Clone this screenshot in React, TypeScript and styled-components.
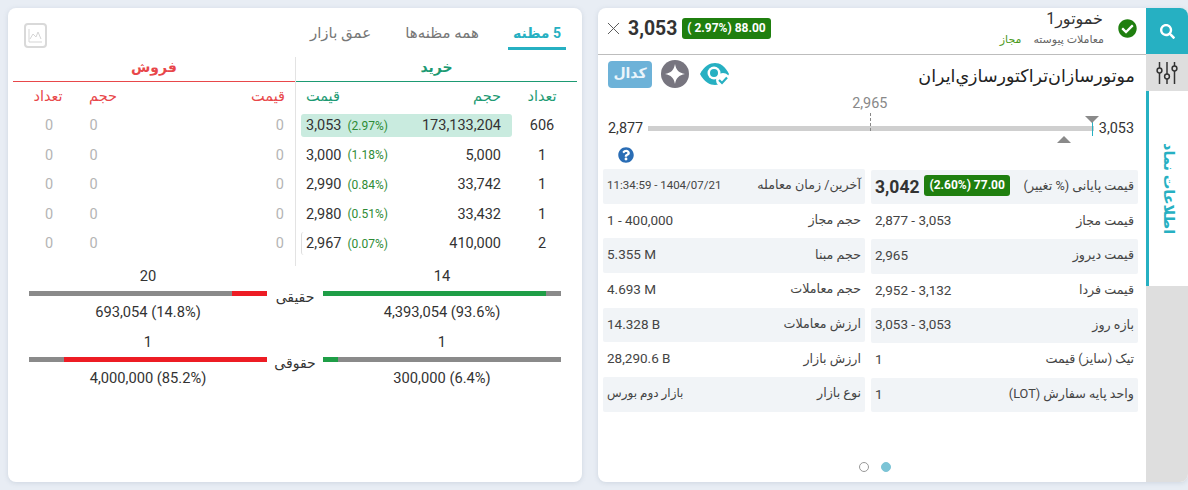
import React from "react";
import styled, { createGlobalStyle } from "styled-components";
import { FaCheckCircle, FaQuestionCircle, FaSearch } from "react-icons/fa";
import { X } from "lucide-react";

const FONT = `Roboto, "DejaVu Sans", sans-serif`;
const TEAL = "#26b0c2";
const BUY = "#1d9a73";
const SELL = "#e8474a";

const GlobalStyle = createGlobalStyle`
  html, body { margin: 0; padding: 0; background: #e8edf4; }
  body { font-family: ${FONT}; color: #333; width: 1188px; height: 490px; overflow: hidden; }
  * { box-sizing: border-box; }
`;

const Page = styled.div`
  display: flex;
  gap: 16px;
  padding: 8px 0 0 8px;
  height: 490px;
`;

const Card = styled.section`
  background: #fff;
  height: 474px;
  border-radius: 8px;
  box-shadow: 0 1px 5px rgba(90, 110, 140, 0.18);
`;

/* left card */
const BookCard = styled(Card)`
  width: 574px;
  padding: 0 5px;
  flex: none;
`;

const BookTop = styled.div`
  display: flex;
  align-items: flex-start;
  justify-content: space-between;
  height: 49px;
  padding: 15px 11px 0 11px;
`;

const ChartButton = styled.div`
  width: 23px;
  height: 25px;
  border: 2px solid #d9d9d9;
  border-radius: 4px;
  display: flex;
  align-items: center;
  justify-content: center;
`;

const Tabs = styled.div`
  display: flex;
  direction: rtl;
  margin-top: -6px;
`;

const Tab = styled.div<{ $active?: boolean }>`
  height: 33px;
  padding: 6px 5px 0;
  margin-left: 24px;
  font-size: ${(p) => (p.$active ? "14px" : "15px")};
  line-height: 20px;
  white-space: nowrap;
  font-weight: ${(p) => (p.$active ? 700 : 400)};
  color: ${(p) => (p.$active ? TEAL : "#777")};
  border-bottom: 3px solid ${(p) => (p.$active ? TEAL : "transparent")};
  &:last-child { margin-left: 0; }
`;

const Book = styled.div`
  display: flex;
  height: 209px;
`;

const Side = styled.div<{ $buy?: boolean }>`
  width: 282px;
  ${(p) => (p.$buy ? "border-left: 1px solid #e3e3e3;" : "")}
`;

const SideTitle = styled.div<{ $color: string }>`
  height: 25px;
  line-height: 21px;
  text-align: center;
  font-size: 14px;
  font-weight: 700;
  color: ${(p) => p.$color};
  border-bottom: 1px solid ${(p) => p.$color};
`;

const SideCols = styled.div`
  display: grid;
  align-items: center;
  height: 29px;
  font-size: 14.5px;
`;

const BuyHead = styled(SideCols)`
  grid-template-columns: 205px 1fr;
  padding-left: 10px;
  color: ${BUY};
`;

const SellHead = styled(SideCols)`
  grid-template-columns: 42px 68px 1fr;
  padding: 0 10px 0 14px;
  color: ${SELL};
`;

const HeadCell = styled.span`
  text-align: center;
  white-space: nowrap;
`;

const HeadCellEnd = styled.span`
  text-align: right;
`;

const BuyHeadVol = styled.div`
  display: flex;
  justify-content: space-between;
  padding-right: 10px;
`;

const CountHead = styled.div`
  text-align: center;
  padding-right: 4px;
  white-space: nowrap;
`;

const BuyRow = styled.div`
  display: flex;
  align-items: center;
  height: 29.5px;
  padding-left: 5px;
  font-size: 14.5px;
  color: #333;
`;

const BuyCell = styled.div<{ $hl?: boolean; $tick?: boolean }>`
  width: 211px;
  height: 23px;
  display: flex;
  align-items: center;
  padding: 0 11px 0 5px;
  border-radius: 3px;
  background: ${(p) => (p.$hl ? "#c9ebdf" : "transparent")};
  ${(p) => (p.$tick ? "border-left: 1px solid #ddd; padding-left: 4px;" : "")}
`;

const Pct = styled.span`
  font-size: 12px;
  color: #2e8b36;
  margin-left: 6px;
`;

const Vol = styled.span`
  margin-left: auto;
`;

const Count = styled.span`
  width: 60px;
  text-align: center;
`;

const SellRow = styled.div`
  display: grid;
  grid-template-columns: 44px 45px 1fr;
  align-items: center;
  height: 29.5px;
  padding: 0 11px 0 14px;
  font-size: 14.5px;
  color: #b5b5b5;
  & > span { text-align: center; }
  & > span:last-child { text-align: right; }
`;

const Split = styled.div`
  display: grid;
  grid-template-columns: 238px 56px 238px;
  padding-left: 16px;
  height: 66px;
`;

const SplitSide = styled.div`
  display: flex;
  flex-direction: column;
  align-items: center;
  font-size: 14.7px;
  color: #333;
  line-height: 20px;
`;

const SplitBar = styled.div`
  width: 100%;
  height: 5px;
  background: #8a8a8a;
  margin: 5px 0 6px;
  display: flex;
`;

const SplitFill = styled.div<{ $color: string; $end?: boolean }>`
  height: 100%;
  background: ${(p) => p.$color};
  margin-left: ${(p) => (p.$end ? "auto" : "0")};
`;

const SplitLabel = styled.div`
  text-align: center;
  font-size: 14px;
  line-height: 20px;
  padding-top: 21px;
  color: #333;
`;

/* right card */
const InfoCard = styled(Card)`
  width: 590px;
  display: flex;
  overflow: hidden;
  flex: none;
`;

const InfoBody = styled.div`
  width: 548px;
  flex: none;
  display: flex;
  flex-direction: column;
`;

const InfoHead = styled.header`
  height: 47px;
  border-bottom: 1px solid #bdbdbd;
  display: flex;
  align-items: center;
  padding: 0 9px 6px 5px;
`;

const PriceNow = styled.span`
  font-size: 19.4px;
  font-weight: 700;
  color: #333;
  margin-left: 4px;
`;

const Badge = styled.span`
  background: #1f7f0f;
  color: #fff;
  font-weight: 700;
  font-size: 12px;
  height: 21px;
  line-height: 21px;
  padding: 0 5px;
  border-radius: 3px;
  margin-left: 5px;
  direction: ltr;
  white-space: nowrap;
`;

const HeadName = styled.div`
  margin-left: auto;
  text-align: right;
  direction: rtl;
`;

const Ticker = styled.div`
  font-size: 16px;
  line-height: 22px;
  color: #333;
  margin-bottom: 2px;
  padding-right: 1px;
`;

const Status = styled.div`
  display: flex;
  gap: 12px;
  font-size: 11px;
  line-height: 16px;
  color: #666;
`;

const Allowed = styled.span`
  color: #4c9a1c;
  font-size: 11px;
`;

const CheckWrap = styled.span`
  display: flex;
  margin-left: 14px;
  color: #1f7f0f;
  font-size: 19px;
`;

const NameRow = styled.div`
  display: flex;
  align-items: center;
  height: 40px;
  padding: 0 11px 2px 10px;
`;

const Codal = styled.div`
  width: 44px;
  height: 27px;
  background: #6db2d8;
  border-radius: 4px;
  color: #eaf5fb;
  font-size: 14px;
  font-weight: 700;
  line-height: 25px;
  text-align: center;
  margin-right: 9px;
`;

const EyeWrap = styled.span`
  display: flex;
  margin-left: 11px;
`;

const CompanyName = styled.h1`
  margin: 4px 0 0 auto;
  font-size: 17.5px;
  font-weight: 400;
  color: #222;
  direction: rtl;
  white-space: nowrap;
`;

const RangeRow = styled.div`
  display: flex;
  align-items: center;
  height: 52px;
  padding: 15px 12px 0 10px;
  font-size: 14.4px;
  color: #333;
`;

const RangeTrack = styled.div`
  position: relative;
  flex: 1;
  height: 5px;
  background: #cfcfcf;
  margin: 0 5px;
`;

const YesterdayMark = styled.div`
  position: absolute;
  left: 222px;
  top: -13px;
  height: 18px;
  border-left: 1px dashed #888;
`;

const YesterdayLabel = styled.span`
  position: absolute;
  left: 204px;
  top: -31px;
  color: #888;
`;

const LastTick = styled.div`
  position: absolute;
  left: 444px;
  top: -4px;
  height: 14px;
  border-left: 1px solid ${TEAL};
`;

const Tri = styled.div<{ $down?: boolean; $left: number; $top: number }>`
  position: absolute;
  left: ${(p) => p.$left}px;
  top: ${(p) => p.$top}px;
  width: 0;
  height: 0;
  border-left: 7px solid transparent;
  border-right: 7px solid transparent;
  ${(p) => (p.$down ? "border-top: 7px solid #8a8a8a;" : "border-bottom: 7px solid #8a8a8a;")}
`;

const HelpRow = styled.div`
  height: 17px;
  padding-left: 20px;
  color: #2a6db5;
  font-size: 16px;
  line-height: 18px;
  margin-bottom: 5px;
`;

const Facts = styled.div`
  display: grid;
  grid-template-columns: 262px 267px;
  column-gap: 6px;
  padding-left: 5px;
`;

const FactCol = styled.div<{ $shift?: boolean }>`
  display: flex;
  flex-direction: column;
  margin-top: ${(p) => (p.$shift ? "0.6px" : "0")};
`;

const Fact = styled.div<{ $filled?: boolean }>`
  height: 34.7px;
  display: flex;
  align-items: center;
  justify-content: space-between;
  direction: rtl;
  padding: 0 4px 3px;
  border-radius: 2px;
  background: ${(p) => (p.$filled ? "#f1f4f7" : "transparent")};
  color: #444;
  white-space: nowrap;
`;

const FactLabel = styled.span`
  font-size: 12.7px;
`;

const FactValue = styled.span<{ $text?: boolean }>`
  direction: ltr;
  font-size: ${(p) => (p.$text ? "12px" : "13.5px")};
  color: #444;
`;

const TimeValue = styled(FactValue)`
  font-size: 11.5px;
`;

const ClosePrice = styled.span`
  display: flex;
  align-items: center;
  direction: ltr;
`;

const CloseNum = styled.span`
  font-size: 17.5px;
  font-weight: 700;
  color: #333;
  margin-top: 3px;
`;

const Dots = styled.div`
  display: flex;
  justify-content: center;
  gap: 12px;
  margin-top: auto;
  padding: 0 0 10px 6px;
`;

const Dot = styled.span<{ $on?: boolean }>`
  width: 10px;
  height: 10px;
  border-radius: 50%;
  border: 1px solid ${(p) => (p.$on ? "#7cc4d6" : "#999")};
  background: ${(p) => (p.$on ? "#7cc4d6" : "#fff")};
`;

const SideNav = styled.nav`
  width: 42px;
  flex: none;
  display: flex;
  flex-direction: column;
  background: #dedede;
`;

const SearchTab = styled.div`
  height: 46px;
  background: ${TEAL};
  color: #fff;
  display: flex;
  align-items: center;
  justify-content: center;
  font-size: 15px;
`;

const FilterTab = styled.div`
  height: 37px;
  display: flex;
  align-items: center;
  justify-content: center;
`;

const InfoTab = styled.div`
  height: 195px;
  background: #fff;
  border-left: 3px solid ${TEAL};
  display: flex;
  align-items: center;
  justify-content: center;
  writing-mode: vertical-rl;
  direction: rtl;
  color: ${TEAL};
  font-size: 14.5px;
  font-weight: 700;
  white-space: nowrap;
`;

const buyRows = [
  ["3,053", "(2.97%)", "173,133,204", "606"],
  ["3,000", "(1.18%)", "5,000", "1"],
  ["2,990", "(0.84%)", "33,742", "1"],
  ["2,980", "(0.51%)", "33,432", "1"],
  ["2,967", "(0.07%)", "410,000", "2"],
];

const priceFacts: [string, string][] = [
  ["قیمت مجاز", "2,877 - 3,053"],
  ["قیمت دیروز", "2,965"],
  ["قیمت فردا", "2,952 - 3,132"],
  ["بازه روز", "3,053 - 3,053"],
  ["تیک (سایز) قیمت", "1"],
  ["واحد پایه سفارش (LOT)", "1"],
];

const tradeFacts: [string, string][] = [
  ["حجم مجاز", "1 - 400,000"],
  ["حجم مبنا", "5.355 M"],
  ["حجم معاملات", "4.693 M"],
  ["ارزش معاملات", "14.328 B"],
  ["ارزش بازار", "28,290.6 B"],
  ["نوع بازار", "بازار دوم بورس"],
];

const ChartGlyph = () => (
  <svg width="15" height="15" viewBox="0 0 15 15" fill="none" stroke="#d5d5d5" strokeWidth="1">
    <path d="M1 1v13h13" />
    <path d="M2 11l3-5 3 3 2-5 3 7" />
  </svg>
);

const SlidersGlyph = () => (
  <svg width="22" height="24" viewBox="0 0 22 24" fill="none" stroke="#333" strokeWidth="1.5">
    <path d="M3.5 1v6M3.5 12v11M11 1v12M11 18v5M18.5 1v4M18.5 10v13" />
    <circle cx="3.5" cy="9.5" r="2.4" />
    <circle cx="11" cy="15.5" r="2.4" />
    <circle cx="18.5" cy="7.5" r="2.4" />
  </svg>
);

const StarBadge = () => (
  <svg width="28" height="28" viewBox="0 0 28 28">
    <circle cx="14" cy="14" r="14" fill="#77757f" />
    <path d="M14 4c1 6 4 9 10 10-6 1-9 4-10 10-1-6-4-9-10-10 6-1 9-4 10-10z" fill="#fff" />
  </svg>
);

const EyeBadge = () => (
  <svg width="30" height="26" viewBox="0 0 30 26">
    <path d="M0 13C4 5 10 2 15 2s10 3 14 11c-4 8-9 11-14 11S4 21 0 13z" fill={TEAL} />
    <circle cx="14" cy="12" r="6.5" fill="#fff" />
    <circle cx="14" cy="12" r="4" fill={TEAL} />
    <circle cx="23" cy="19" r="7" fill="#fff" />
    <path d="M19 19l3 3 5-5.5" fill="none" stroke={TEAL} strokeWidth="2.2" />
  </svg>
);

export default function App() {
  return (
    <>
      <GlobalStyle />
      <Page>
        <BookCard>
          <BookTop>
            <ChartButton>
              <ChartGlyph />
            </ChartButton>
            <Tabs>
              <Tab $active>5 مظنه</Tab>
              <Tab>همه مظنه‌ها</Tab>
              <Tab>عمق بازار</Tab>
            </Tabs>
          </BookTop>
          <Book>
            <Side>
              <SideTitle $color={SELL}>فروش</SideTitle>
              <SellHead>
                <HeadCell>تعداد</HeadCell>
                <HeadCell>حجم</HeadCell>
                <HeadCellEnd>قیمت</HeadCellEnd>
              </SellHead>
              {buyRows.map((r) => (
                <SellRow key={r[0]}>
                  <span>0</span>
                  <span>0</span>
                  <span>0</span>
                </SellRow>
              ))}
            </Side>
            <Side $buy>
              <SideTitle $color={BUY}>خرید</SideTitle>
              <BuyHead>
                <BuyHeadVol>
                  <span>قیمت</span>
                  <span>حجم</span>
                </BuyHeadVol>
                <CountHead>تعداد</CountHead>
              </BuyHead>
              {buyRows.map((r, i) => (
                <BuyRow key={r[0]}>
                  <BuyCell $hl={i === 0} $tick={i === 4}>
                    {r[0]}
                    <Pct>{r[1]}</Pct>
                    <Vol>{r[2]}</Vol>
                  </BuyCell>
                  <Count>{r[3]}</Count>
                </BuyRow>
              ))}
            </Side>
          </Book>
          <Split>
            <SplitSide>
              20
              <SplitBar>
                <SplitFill $color="#ed1c24" $end style={{ width: "14.8%" }} />
              </SplitBar>
              693,054 (14.8%)
            </SplitSide>
            <SplitLabel>حقیقی</SplitLabel>
            <SplitSide>
              14
              <SplitBar>
                <SplitFill $color="#1f9e47" style={{ width: "93.6%" }} />
              </SplitBar>
              4,393,054 (93.6%)
            </SplitSide>
          </Split>
          <Split>
            <SplitSide>
              1
              <SplitBar>
                <SplitFill $color="#ed1c24" $end style={{ width: "85.2%" }} />
              </SplitBar>
              4,000,000 (85.2%)
            </SplitSide>
            <SplitLabel>حقوقی</SplitLabel>
            <SplitSide>
              1
              <SplitBar>
                <SplitFill $color="#1f9e47" style={{ width: "6.4%" }} />
              </SplitBar>
              300,000 (6.4%)
            </SplitSide>
          </Split>
        </BookCard>

        <InfoCard>
          <InfoBody>
            <InfoHead>
              <X size={21} strokeWidth={1.1} color="#555" />
              <PriceNow>3,053</PriceNow>
              <Badge>( 2.97%) 88.00</Badge>
              <HeadName>
                <Ticker>خموتور1</Ticker>
                <Status>
                  معاملات پیوسته
                  <Allowed>مجاز</Allowed>
                </Status>
              </HeadName>
              <CheckWrap>
                <FaCheckCircle />
              </CheckWrap>
            </InfoHead>
            <NameRow>
              <Codal>کدال</Codal>
              <StarBadge />
              <EyeWrap>
                <EyeBadge />
              </EyeWrap>
              <CompanyName>موتورسازان‌تراکتورسازي‌ایران</CompanyName>
            </NameRow>
            <RangeRow>
              2,877
              <RangeTrack>
                <YesterdayLabel>2,965</YesterdayLabel>
                <YesterdayMark />
                <LastTick />
                <Tri $down $left={437} $top={-10} />
                <Tri $left={409} $top={10} />
              </RangeTrack>
              3,053
            </RangeRow>
            <HelpRow>
              <FaQuestionCircle />
            </HelpRow>
            <Facts>
              <FactCol>
                <Fact $filled>
                  <FactLabel>آخرین/ زمان معامله</FactLabel>
                  <TimeValue>11:34:59 - 1404/07/21</TimeValue>
                </Fact>
                {tradeFacts.map(([k, v], i) => (
                  <Fact key={k} $filled={i % 2 === 1}>
                    <FactLabel>{k}</FactLabel>
                    <FactValue $text={i === 5}>{v}</FactValue>
                  </Fact>
                ))}
              </FactCol>
              <FactCol $shift>
                <Fact $filled>
                  <FactLabel>قیمت پایانی (% تغییر)</FactLabel>
                  <ClosePrice>
                    <CloseNum>3,042</CloseNum>
                    <Badge>(2.60%) 77.00</Badge>
                  </ClosePrice>
                </Fact>
                {priceFacts.map(([k, v], i) => (
                  <Fact key={k} $filled={i % 2 === 1}>
                    <FactLabel>{k}</FactLabel>
                    <FactValue>{v}</FactValue>
                  </Fact>
                ))}
              </FactCol>
            </Facts>
            <Dots>
              <Dot />
              <Dot $on />
            </Dots>
          </InfoBody>
          <SideNav>
            <SearchTab>
              <FaSearch />
            </SearchTab>
            <FilterTab>
              <SlidersGlyph />
            </FilterTab>
            <InfoTab>اطلاعات نماد</InfoTab>
          </SideNav>
        </InfoCard>
      </Page>
    </>
  );
}
